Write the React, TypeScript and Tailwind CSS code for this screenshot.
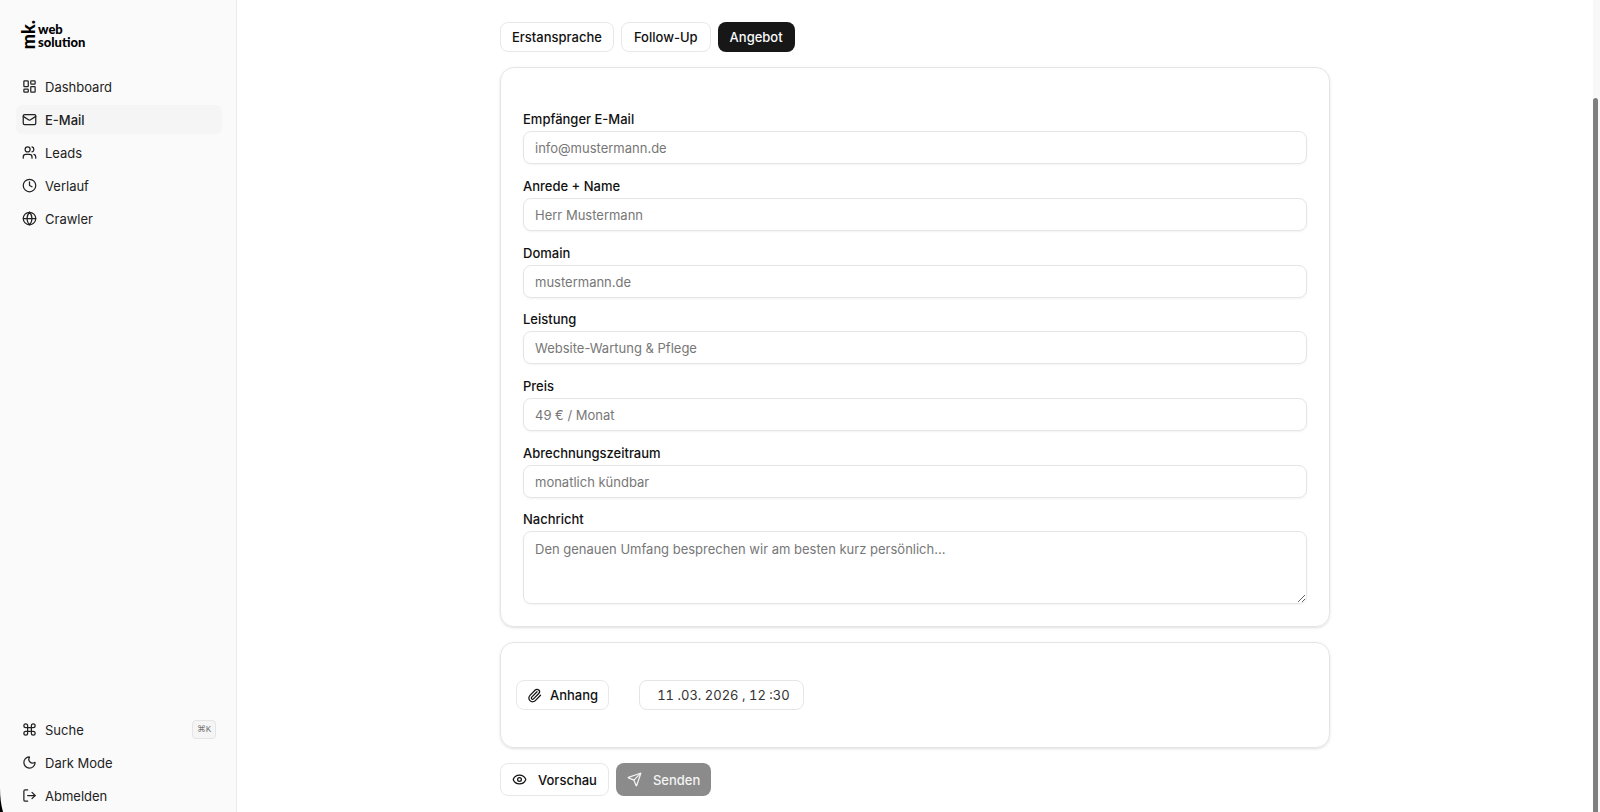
import type { ComponentType } from "react";
import {
  Clock,
  Command,
  Eye,
  Globe,
  LayoutDashboard,
  LogOut,
  Mail,
  Moon,
  Paperclip,
  Send,
  Users,
} from "lucide-react";

type Icon = ComponentType<{ className?: string; strokeWidth?: number }>;

const navItems: { label: string; icon: Icon; active?: boolean }[] = [
  { label: "Dashboard", icon: LayoutDashboard },
  { label: "E-Mail", icon: Mail, active: true },
  { label: "Leads", icon: Users },
  { label: "Verlauf", icon: Clock },
  { label: "Crawler", icon: Globe },
];

// Kontakt und Konditionen
const fieldGroups = [
  [
    { id: "email", label: "Empfänger E-Mail", placeholder: "info@mustermann.de" },
    { id: "name", label: "Anrede + Name", placeholder: "Herr Mustermann" },
    { id: "domain", label: "Domain", placeholder: "mustermann.de" },
  ],
  [
    { id: "service", label: "Leistung", placeholder: "Website-Wartung & Pflege" },
    { id: "price", label: "Preis", placeholder: "49 € / Monat" },
    { id: "period", label: "Abrechnungszeitraum", placeholder: "monatlich kündbar" },
  ],
];

const navClass = "flex h-[29px] w-full items-center gap-2 rounded-md px-[6px] text-left";
const outlineButton =
  "flex items-center rounded-lg border border-[#e8e8e8] bg-white font-medium text-[#111]";

function Logo() {
  return (
    <a href="#" aria-label="mk. web solution" className="flex items-end gap-1 text-black">
      <span className="rotate-180 font-[Lato] text-lg leading-3 font-black [writing-mode:vertical-rl]">
        mk.
      </span>
      <span className="flex flex-col font-[Lato] text-[13px] leading-[13px] font-black">
        <span>web</span>
        <span>solution</span>
      </span>
    </a>
  );
}

function Sidebar() {
  return (
    <aside className="flex w-[237px] shrink-0 flex-col border-r border-[#ebebeb] bg-[#fafafa] pr-[14px] pb-[2px] pl-4 text-[#222]">
      <div className="flex h-[49px] items-end px-[6px]">
        <Logo />
      </div>
      <nav className="mt-[23px] flex flex-col gap-1">
        {navItems.map(({ label, icon: ItemIcon, active }) => (
          <a
            key={label}
            href="#"
            className={active ? `${navClass} bg-[#f5f5f5] font-medium` : navClass}
          >
            <ItemIcon className="size-[15px]" />
            {label}
          </a>
        ))}
      </nav>
      <div className="mt-auto flex flex-col gap-1">
        <button className={navClass}>
          <Command className="size-[15px]" />
          Suche
          <kbd className="ml-auto flex h-[19px] w-6 items-center justify-center rounded border border-[#e5e5e5] bg-[#f5f5f5] font-['Liberation_Mono'] text-[9px] text-[#777]">
            ⌘K
          </kbd>
        </button>
        <button className={navClass}>
          <Moon className="size-[15px]" />
          Dark Mode
        </button>
        <button className={navClass}>
          <LogOut className="size-[15px]" />
          Abmelden
        </button>
      </div>
    </aside>
  );
}

function OfferForm() {
  return (
    <section className="flex flex-col gap-3 rounded-[14px] border border-[#e5e5e5] px-[22px] pt-[42px] pb-[22px] shadow-sm">
      {fieldGroups.map((group) => (
        <div key={group[0].id} className="flex flex-col gap-[13px]">
          {group.map(({ id, label, placeholder }) => (
            <div key={id} className="flex flex-col gap-[3px]">
              <label htmlFor={id} className="leading-[18px] font-medium text-[#111]">
                {label}
              </label>
              <input
                id={id}
                placeholder={placeholder}
                className="h-[33px] rounded-lg border border-[#e5e5e5] px-[11px] shadow-xs placeholder:text-[#777]"
              />
            </div>
          ))}
        </div>
      ))}
      <div className="flex flex-col gap-[3px]">
        <label htmlFor="message" className="leading-[18px] font-medium text-[#111]">
          Nachricht
        </label>
        <textarea
          id="message"
          placeholder="Den genauen Umfang besprechen wir am besten kurz persönlich..."
          className="h-[73px] rounded-lg border border-[#e5e5e5] px-[11px] py-[7px] shadow-xs placeholder:text-[#777]"
        />
      </div>
    </section>
  );
}

export default function App() {
  return (
    <div className="relative flex min-h-screen bg-white font-[Inter,sans-serif] text-[13px] leading-5">
      <Sidebar />
      <main className="flex flex-1 flex-col pt-[22px] pb-4">
        <div className="mx-auto flex w-full max-w-[830px] flex-col gap-[15px]">
          <div className="flex gap-[7px]">
            <button className={`${outlineButton} h-[30px] px-[11px]`}>Erstansprache</button>
            <button className={`${outlineButton} h-[30px] px-3`}>Follow-Up</button>
            <button className="h-[30px] rounded-lg bg-[#171717] px-3 font-medium text-[#fafafa]">
              Angebot
            </button>
          </div>

          <OfferForm />

          <section className="flex gap-[30px] rounded-[14px] border border-[#e5e5e5] px-[15px] py-[37px] shadow-sm">
            <button className={`${outlineButton} h-[30px] gap-2 px-[10px]`}>
              <Paperclip className="size-[15px]" />
              Anhang
            </button>
            <input
              aria-label="Sendezeitpunkt"
              defaultValue="11 .03. 2026 , 12 :30"
              className="h-[30px] w-[165px] rounded-lg border border-[#e5e5e5] pr-2 pl-[17px] text-[#333] tabular-nums"
            />
          </section>

          <div className="flex gap-[7px]">
            <button className={`${outlineButton} h-[33px] gap-[11px] px-[11px]`}>
              <Eye className="size-[15px]" />
              Vorschau
            </button>
            <button className="flex h-[33px] items-center gap-[11px] rounded-lg bg-[#8b8b8b] px-[11px] font-medium text-[#f4f4f4]">
              <Send className="size-[15px]" />
              Senden
            </button>
          </div>
        </div>
      </main>
      {/* Scrollleiste */}
      <div className="flex w-[7px] shrink-0 bg-[#f8f8f8] pt-[98px]">
        <div className="w-[5px] rounded-t-full bg-[#7f7f7f]" />
      </div>
      {/* Fensterecke */}
      <svg className="absolute bottom-0 left-0 h-6 w-[3px]" viewBox="0 0 3 24">
        <path d="M0 0C0 9 1 17 3 24H0Z" fill="#000" />
      </svg>
    </div>
  );
}
